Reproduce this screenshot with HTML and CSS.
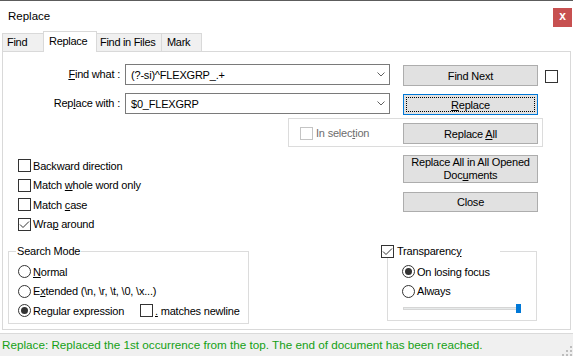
FILE: index.html
```html
<!DOCTYPE html>
<html>
<head>
<meta charset="utf-8">
<title>Replace</title>
<link rel="stylesheet" href="styles.css">
</head>
<body>
<div class="titlebar">
  <span class="title">Replace</span>
  <span class="close">x</span>
</div>
<div class="tabs">
  <div class="tab tab-find">Find</div>
  <div class="tab tab-replace active">Replace</div>
  <div class="tab tab-files">Find in Files</div>
  <div class="tab tab-mark">Mark</div>
</div>
<div class="panel">
  <div class="row row-find">
    <span class="field-label"><u>F</u>ind what :</span>
    <div class="combo"><span class="combo-text">(?-si)^FLEXGRP_.+</span><svg class="chev" width="8" height="5" viewBox="0 0 8 5"><path d="M0.5 0.5 L4 4 L7.5 0.5" fill="none" stroke="#606060" stroke-width="1"/></svg></div>
    <div class="btn btn-row"><span>Find Next</span></div>
    <span class="box side-check"></span>
  </div>
  <div class="row row-replace">
    <span class="field-label">Rep<u>l</u>ace with :</span>
    <div class="combo"><span class="combo-text">$0_FLEXGRP</span><svg class="chev" width="8" height="5" viewBox="0 0 8 5"><path d="M0.5 0.5 L4 4 L7.5 0.5" fill="none" stroke="#606060" stroke-width="1"/></svg></div>
    <div class="btn btn-row focused"><span class="focus-ring"><span><u>R</u>eplace</span></span></div>
  </div>
  <div class="insel">
    <span class="box disabled-box"></span>
    <span class="disabled-text">In selec<u>t</u>ion</span>
    <div class="btn btn-all"><span>Replace <u>A</u>ll</span></div>
  </div>
  <div class="mid">
    <div class="checks">
      <div class="check-row"><span class="box"></span><span>Backward direction</span></div>
      <div class="check-row"><span class="box"></span><span>Match <u>w</u>hole word only</span></div>
      <div class="check-row"><span class="box"></span><span>Match <u>c</u>ase</span></div>
      <div class="check-row"><span class="box"><svg width="11" height="11" viewBox="0 0 11 11"><path d="M1 5.5 L4 8.5 L10 2.5" fill="none" stroke="#333" stroke-width="1"/></svg></span><span>Wra<u>p</u> around</span></div>
    </div>
    <div class="actions">
      <div class="btn btn-tall"><span>Replace All in All Opened<br>Doc<u>u</u>ments</span></div>
      <div class="btn btn-close"><span>Close</span></div>
    </div>
  </div>
  <div class="bottom">
    <fieldset class="group search">
      <legend class="legend-search">Search Mode</legend>
      <div class="radio-row"><svg class="radio" width="13" height="13" viewBox="0 0 13 13"><circle cx="6.5" cy="6.5" r="6" fill="#fff" stroke="#333"/></svg><span><u>N</u>ormal</span></div>
      <div class="radio-row"><svg class="radio" width="13" height="13" viewBox="0 0 13 13"><circle cx="6.5" cy="6.5" r="6" fill="#fff" stroke="#333"/></svg><span>E<u>x</u>tended (\n, \r, \t, \0, \x...)</span></div>
      <div class="radio-row"><svg class="radio" width="13" height="13" viewBox="0 0 13 13"><circle cx="6.5" cy="6.5" r="6" fill="#fff" stroke="#333"/><circle cx="6.5" cy="6.5" r="3.5" fill="#333"/></svg><span class="regex-label">Re<u>g</u>ular expression</span><span class="box"></span><span class="newline-label"><u>.</u> matches newline</span></div>
    </fieldset>
    <fieldset class="group transp">
      <legend class="legend-transp"><span class="box"><svg width="11" height="11" viewBox="0 0 11 11"><path d="M1 5.5 L4 8.5 L10 2.5" fill="none" stroke="#333" stroke-width="1"/></svg></span><span>Transparenc<u>y</u></span></legend>
      <div class="radio-row"><svg class="radio" width="13" height="13" viewBox="0 0 13 13"><circle cx="6.5" cy="6.5" r="6" fill="#fff" stroke="#333"/><circle cx="6.5" cy="6.5" r="3.5" fill="#333"/></svg><span>On losing focus</span></div>
      <div class="radio-row"><svg class="radio" width="13" height="13" viewBox="0 0 13 13"><circle cx="6.5" cy="6.5" r="6" fill="#fff" stroke="#333"/></svg><span>Always</span></div>
      <div class="slider"><span class="thumb"></span></div>
    </fieldset>
  </div>
</div>
<div class="status">
  <span class="status-text">Replace: Replaced the 1st occurrence from the top. The end of document has been reached.</span>
  <svg class="grip" width="10" height="10" viewBox="0 0 10 10"><rect x="8" y="0" width="2" height="2" fill="#bdbdbd"/><rect x="4" y="4" width="2" height="2" fill="#bdbdbd"/><rect x="8" y="4" width="2" height="2" fill="#bdbdbd"/><rect x="0" y="8" width="2" height="2" fill="#bdbdbd"/><rect x="4" y="8" width="2" height="2" fill="#bdbdbd"/><rect x="8" y="8" width="2" height="2" fill="#bdbdbd"/></svg>
</div>
</body>
</html>
```
FILE: styles.css
```css
* { box-sizing: border-box; }
html, body { margin: 0; padding: 0; }
body {
  width: 573px;
  height: 356px;
  overflow: hidden;
  background: #fff;
  border-top: 1px solid #5c5c5c;
  font-family: "Liberation Sans", Arial, sans-serif;
  font-size: 11px;
  letter-spacing: -0.2px;
  color: #000;
}
u { text-decoration: underline; text-underline-offset: 1px; }

.titlebar { display: flex; justify-content: space-between; height: 30px; }
.title { margin: 7px 0 0 8px; font-size: 11.5px; line-height: 16px; letter-spacing: 0; }
.close {
  width: 19px; height: 19px; margin: 7px 1px 0 0;
  background: #c75050; color: #fff; font-weight: bold;
  font-size: 12px; line-height: 17px; text-align: center;
}

.tabs { display: flex; align-items: flex-end; height: 20px; padding-left: 2px; }
.tab {
  height: 18px; border: 1px solid #d9d9d9; border-bottom: none;
  background: #f0f0f0; line-height: 17px; margin-left: -1px; white-space: nowrap;
  letter-spacing: -0.3px;
}
.tab-find { margin-left: 0; width: 42px; padding-left: 4px; }
.tab-replace { width: 54px; padding-left: 5px; }
.tab-files { width: 66px; padding-left: 3px; }
.tab-mark { width: 41px; padding-left: 5px; }
.tab.active {
  height: 21px; background: #fff; margin-bottom: -1px;
  position: relative; z-index: 1; line-height: 18px;
}

.panel {
  margin-left: 2px; width: 569px; height: 279px;
  border: 1px solid #d9d9d9;
}
.row { display: flex; align-items: flex-start; }
.row-find { margin-top: 12px; }
.row-replace { margin-top: 7px; }
.field-label { width: 120px; text-align: right; padding-right: 3px; line-height: 21px; white-space: nowrap; }
.combo {
  margin-left: 2px; width: 265px; height: 21px; border: 1px solid #7a7a7a;
  display: flex; align-items: center; justify-content: space-between;
  padding: 0 3px 0 5px; background: #fff;
}
.chev { margin-right: 1px; }
.btn {
  display: flex; align-items: center; justify-content: center; text-align: center;
  background: #e1e1e1; border: 1px solid #adadad; width: 135px; height: 21px;
  white-space: nowrap;
}
.btn-row { margin: 1px 0 0 13px; }
.focused { border-color: #0078d7; padding: 2px; }
.focus-ring {
  width: 100%; height: 100%; border: 1px dotted #000;
  display: flex; align-items: center; justify-content: center;
}
.box {
  display: inline-flex; align-items: center; justify-content: center;
  width: 13px; height: 13px; border: 1px solid #333; background: #fff; flex: none;
}
.side-check { margin: 6px 0 0 7px; }

.insel {
  margin: 3px 0 0 285px; width: 255px; height: 29px; border: 1px solid #dcdcdc;
  display: flex; align-items: flex-start;
}
.disabled-box { border-color: #c4c4c4; margin: 8px 0 0 11px; }
.disabled-text { color: #6d6d6d; margin: 8px 0 0 3px; line-height: 13px; }
.btn-all { margin: 4px 4px 0 auto; }

.mid { display: flex; margin-top: 8px; }
.checks { margin-left: 15px; width: 385px; padding-top: 1px; }
.check-row { display: flex; align-items: center; height: 19.5px; }
.check-row .box { margin-right: 2px; }
.actions { width: 135px; display: flex; flex-direction: column; }
.btn-tall { height: 28px; line-height: 13px; }
.btn-close { margin-top: 9px; height: 20px; }

.bottom { display: flex; align-items: flex-start; margin-top: 10px; }
.group { margin: 0; border: 1px solid #dcdcdc; min-width: 0; }
.search { margin-left: 5px; width: 241px; padding: 4px 0 2px 0; }
.legend-search { margin-left: 7px; padding: 0 1px; line-height: 14px; }
.radio-row { display: flex; align-items: center; height: 19.5px; white-space: nowrap; }
.search .radio-row { padding-left: 9px; }
.radio { flex: none; margin-right: 2px; }
.regex-label { width: 107px; }
.newline-label { margin-left: 2px; }

.transp { margin-left: 138px; width: 150px; padding: 4px 0 0 0; }
.legend-transp {
  margin-left: -7px; padding: 0; width: 119px; height: 14px; line-height: 14px;
  display: flex; align-items: center; background: #fff;
}
.legend-transp .box { margin-right: 3px; }
.transp .radio-row { padding-left: 14px; }
.slider {
  margin: 6px 0 10px 15px; width: 118px; height: 3px;
  background: #e7eaea; border: 1px solid #d6d6d6;
  display: flex; align-items: center; justify-content: flex-end;
}
.thumb { width: 5px; height: 9px; background: #0078d7; flex: none; margin-right: -1px; }

.status {
  margin-top: 3px; height: 23px; border-top: 1px solid #dadada; background: #f0f0f0;
  display: flex; justify-content: space-between; align-items: flex-start;
  padding-left: 2px;
}
.status-text { color: #14a014; line-height: 21px; font-size: 11.7px; letter-spacing: 0; white-space: nowrap; }
.grip { margin: 12px 1px 0 0; }
```
